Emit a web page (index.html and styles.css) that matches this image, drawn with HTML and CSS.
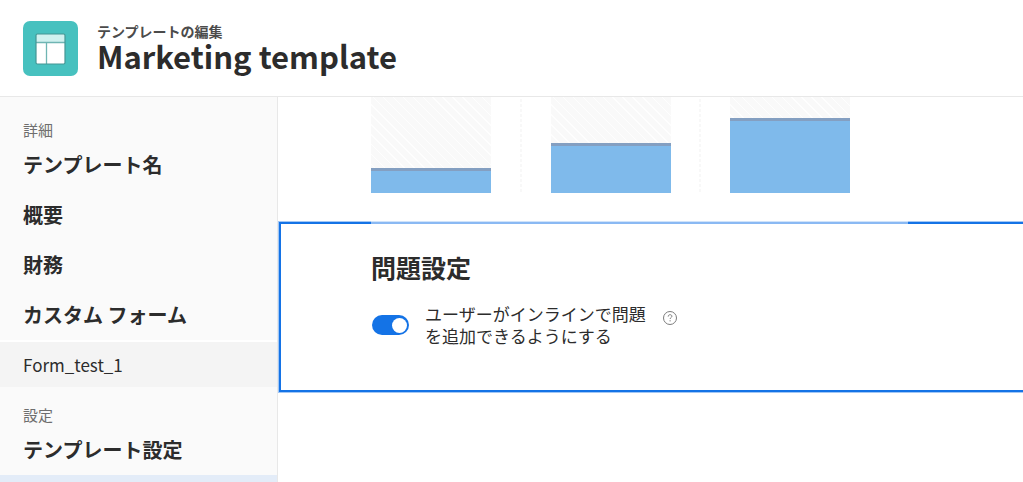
FILE: index.html
```html
<!DOCTYPE html>
<html lang="ja">
<head>
<meta charset="utf-8">
<meta name="viewport" content="width=device-width, initial-scale=1">
<title>Marketing template</title>
<link rel="stylesheet" href="styles.css">
</head>
<body class="app">
<header class="header">
  <svg class="header-icon" viewBox="0 0 55 55" aria-hidden="true">
    <rect width="55" height="55" rx="7" fill="#47c1bf"/>
    <rect x="13" y="13" width="29" height="30" rx="1" fill="#fff"/>
    <path d="M13 13h29v8.500h-29z" fill="#d0f1ef"/>
    <path d="M13 21.500h29M23.500 22v21" stroke="#6fb5b3" stroke-width="1.300" fill="none"/>
    <rect x="13" y="13" width="29" height="30" rx="1.500" stroke="#459694" stroke-width="1.200" fill="none"/>
  </svg>
  <div class="header-text">
    <p class="eyebrow">テンプレートの編集</p>
    <h1 class="title">Marketing template</h1>
  </div>
</header>
<div class="layout">
  <nav class="sidebar">
    <h2 class="group">詳細</h2>
    <a class="item" href="#name">テンプレート名</a>
    <a class="item" href="#overview">概要</a>
    <a class="item" href="#finance">財務</a>
    <a class="item" href="#forms">カスタム フォーム</a>
    <a class="subitem" href="#form1">Form_test_1</a>
    <h2 class="group">設定</h2>
    <a class="item" href="#settings">テンプレート設定</a>
    <div class="current"></div>
  </nav>
  <main class="main">
    <div class="chart">
      <div class="bar"><div class="fill low"></div></div>
      <div class="divider"></div>
      <div class="bar"><div class="fill mid"></div></div>
      <div class="divider"></div>
      <div class="bar"><div class="fill high"></div></div>
    </div>
    <section class="panel">
      <h2 class="panel-title">問題設定</h2>
      <div class="setting">
        <input class="switch" type="checkbox" role="switch" id="inline" checked>
        <label class="setting-label" for="inline">ユーザーがインラインで問題を追加できるようにする</label>
        <button class="help" type="button" aria-label="ヘルプ">
          <svg class="help-icon" viewBox="0 0 16 16" fill="none" stroke="#7c7c7c">
            <circle cx="8" cy="8" r="6.500"/>
            <path d="M6.200 6.600c0-1.200.8-1.900 1.900-1.900s1.800.7 1.800 1.600c0 1.200-1.800 1.300-1.800 2.700"/>
            <path d="M8.100 10.200v1.200"/>
          </svg>
        </button>
      </div>
    </section>
  </main>
</div>
</body>
</html>
```
FILE: styles.css
```css
* { box-sizing: border-box; }

.app {
  margin: 0;
  height: 100vh;
  display: flex;
  flex-direction: column;
  overflow: hidden;
  background: #fff;
  color: #2c2c2c;
  font-family: "Noto Sans CJK JP", sans-serif;
}

.header {
  display: flex;
  align-items: flex-start;
  gap: 19px;
  padding: 21px 23px 20px;
  border-bottom: 1px solid #e8e8e8;
}
.header-icon { width: 55px; height: 55px; flex: none; }
.header-text { display: flex; flex-direction: column; padding-top: 3px; }
.eyebrow { margin: 0; font-size: 14px; line-height: 15px; font-weight: 700; color: #4b4b4b; }
.title { margin: 0; font-size: 31px; line-height: 34px; font-weight: 700; }

.layout { flex: 1; min-height: 0; display: flex; }

.sidebar {
  width: 278px;
  flex: none;
  display: flex;
  flex-direction: column;
  background: #fafafa;
  border-right: 1px solid #e8e8e8;
  overflow: hidden;
}
.group {
  flex: none;
  margin: 0;
  padding: 22px 23px 0;
  font-size: 15px;
  line-height: 21px;
  font-weight: 400;
  color: #6e6e6e;
}
.group ~ .group { padding-top: 17px; }
.item {
  flex: none;
  padding: 0 23px;
  font-size: 20px;
  line-height: 50px;
  font-weight: 700;
  color: #2c2c2c;
  text-decoration: none;
}
.subitem {
  flex: none;
  padding: 0 23px;
  border-top: 2px solid #fff;
  background: #f4f4f4;
  font-size: 17px;
  line-height: 45px;
  color: #2c2c2c;
  text-decoration: none;
}
.current { flex: none; height: 50px; background: #e3ecf8; }

.main { flex: 1; min-width: 0; overflow: hidden; }

.chart {
  display: flex;
  justify-content: space-between;
  max-width: 479px;
  height: 96px;
  margin: 0 93px 29px;
}
.bar {
  width: 120px;
  flex: none;
  display: flex;
  flex-direction: column;
  justify-content: flex-end;
  background: repeating-linear-gradient(45deg, #f9f9f9 0 6px, #fefefe 6px 7px);
}
.fill { background: #7fbaeb; border-top: 3px solid #849fc1; }
.low { height: 25px; }
.mid { height: 50px; }
.high { height: 75px; }
.divider {
  width: 2px;
  flex: none;
  background: repeating-linear-gradient(#fff 0 2px, #f8f8f8 2px 5px);
}

.panel {
  position: relative;
  margin: 0 -8px 0 1px;
  padding: 25px 0 43px 90px;
  border: 2px solid #1473e6;
  box-shadow: 0 0 0 1px #a2c7f5;
}
/* Pale strip across the top edge of the focused panel */
.panel::before {
  content: "";
  position: absolute;
  top: -3px;
  left: 90px;
  width: 537px;
  height: 2px;
  background: #8ab9f3;
  border-top: 1px solid #d0e3fa;
}
.panel-title { margin: 0; font-size: 25px; line-height: 36px; font-weight: 700; }
.setting { display: flex; align-items: flex-start; padding-top: 18px; }
.switch {
  appearance: none;
  width: 37px;
  height: 20px;
  flex: none;
  display: flex;
  justify-content: flex-end;
  align-items: center;
  margin: 12px 16px 0 1px;
  padding: 2px;
  border-radius: 10px;
  background: #1473e6;
}
.switch::before {
  content: "";
  width: 15px;
  height: 15px;
  border-radius: 50%;
  background: #fff;
}
.switch:not(:checked) { justify-content: flex-start; background: #b3b3b3; }
.setting-label { width: 230px; font-size: 17px; line-height: 22px; }
.help { margin: 7px 0 0 7px; padding: 0; border: 0; background: none; }
.help-icon { display: block; width: 16px; height: 16px; }
```
